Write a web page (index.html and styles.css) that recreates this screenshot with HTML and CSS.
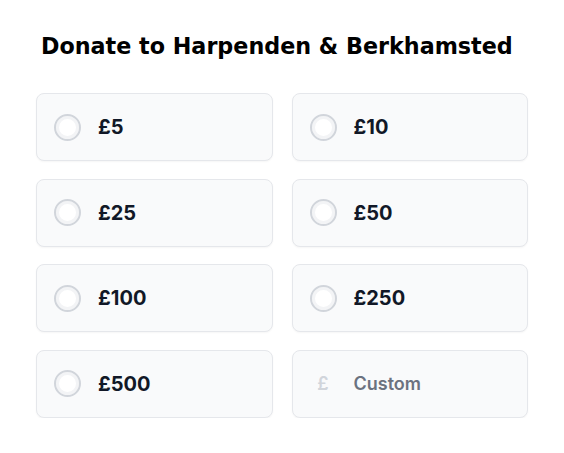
FILE: index.html
```html
<!DOCTYPE html>
<html>
<head>
<meta charset="utf-8">
<link rel="stylesheet" href="styles.css">
</head>
<body>
<div class="donate">
  <h1 class="title">Donate to Harpenden &amp; Berkhamsted</h1>
  <div class="grid">
    <div class="option"><span class="radio"></span><span class="amount">£5</span></div>
    <div class="option"><span class="radio"></span><span class="amount">£10</span></div>
    <div class="option"><span class="radio"></span><span class="amount">£25</span></div>
    <div class="option"><span class="radio"></span><span class="amount">£50</span></div>
    <div class="option"><span class="radio"></span><span class="amount">£100</span></div>
    <div class="option"><span class="radio"></span><span class="amount">£250</span></div>
    <div class="option"><span class="radio"></span><span class="amount">£500</span></div>
    <div class="option custom"><span class="pound">£</span><span class="custom-label">Custom</span></div>
  </div>
</div>
</body>
</html>
```
FILE: styles.css
```css
html, body {
  margin: 0;
  padding: 0;
  background: #ffffff;
}
.donate {
  padding: 32px 36px 0 36px;
}
.title {
  margin: 0 0 33px 5px;
  font-family: "DejaVu Sans", sans-serif;
  font-weight: bold;
  font-size: 22.25px;
  line-height: 28px;
  color: #000000;
}
.grid {
  display: grid;
  grid-template-columns: 1fr 1fr;
  column-gap: 19px;
  row-gap: 17.67px;
}
.option {
  display: flex;
  align-items: center;
  height: 66px;
  padding: 0 17px;
  background: #f9fafb;
  border: 1px solid #e5e7eb;
  border-radius: 8px;
  box-shadow: 0 1px 2px rgba(0,0,0,0.04);
  font-family: Inter, "Noto Sans", sans-serif;
}
.radio {
  box-sizing: border-box;
  width: 27px;
  height: 27px;
  border-radius: 50%;
  border: 2px solid #d1d5db;
  background: #ffffff;
  box-shadow: inset 0 0 0 3px #f3f4f6;
  flex: none;
}
.amount {
  margin-left: 17px;
  font-size: 20px;
  font-weight: 700;
  color: #111827;
}
.pound {
  width: 27px;
  text-align: center;
  font-size: 18px;
  font-weight: 600;
  color: #d1d5db;
  flex: none;
}
.custom-label {
  margin-left: 17px;
  font-size: 18px;
  font-weight: 600;
  color: #6b7280;
}
```
